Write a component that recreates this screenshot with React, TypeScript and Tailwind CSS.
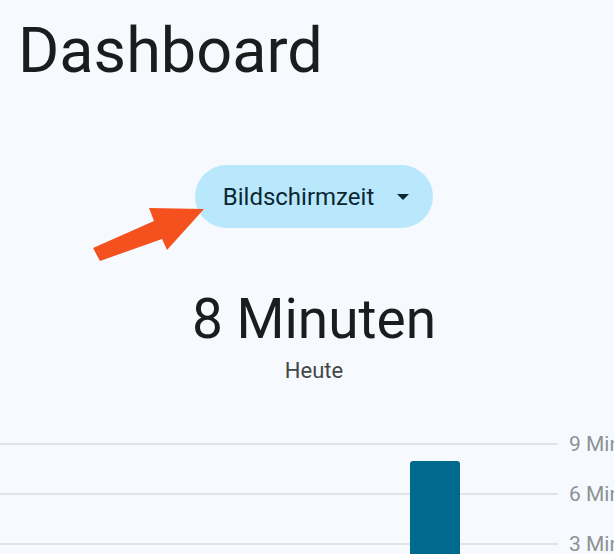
import React from "react";

export default function App() {
  const rows = ["9 Minuten", "6 Minuten", "3 Minuten"];
  return (
    <div
      className="relative w-full h-[554px] overflow-hidden bg-[#f6fafe]"
      style={{ fontFamily: "Roboto, 'Noto Sans', sans-serif" }}
    >
      <h1 className="pl-[18px] pt-[19px] text-[63px] leading-[63px] text-[#1b1c1e] font-normal">
        Dashboard
      </h1>

      <div className="mt-[83px] flex justify-center pl-[14px]">
        <button className="h-[63px] flex items-center gap-[23px] pl-[28px] pr-[24px] rounded-full bg-[#b9e8fd] text-[#0b2733] text-[24px] leading-none">
          <span>Bildschirmzeit</span>
          <svg width="12" height="6" viewBox="0 0 12 6">
            <path d="M0 0 L12 0 L6 6 Z" fill="#0b2733" />
          </svg>
        </button>
      </div>

      <div className="flex flex-col items-center pl-[14px]">
        <div className="mt-[64px] text-[55px] leading-[55px] text-[#1b1c1e]">8 Minuten</div>
        <div className="mt-[13px] text-[22px] leading-[22px] text-[#444746]">Heute</div>
      </div>

      <div className="relative mt-[37px]">
        {rows.map((r) => (
          <div key={r} className="flex items-center h-[50px]">
            <div className="w-[558px] h-[2px] bg-[#e1e3e6] shrink-0" />
            <div className="ml-[11px] text-[21px] leading-none text-[#8e9193] whitespace-nowrap">{r}</div>
          </div>
        ))}
        <div className="absolute left-[410px] top-[42px] w-[50px] h-[200px] rounded-t-[3px] bg-[#006a8e]" />
      </div>

      <svg className="absolute left-0 top-0 pointer-events-none" width="614" height="554">
        <polygon
          points="204,209 149,208 154,221 93,248 100,261 162,239 167,250"
          fill="#f4511e"
        />
      </svg>
    </div>
  );
}
